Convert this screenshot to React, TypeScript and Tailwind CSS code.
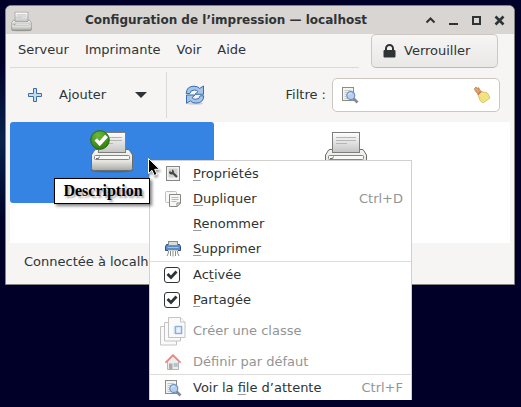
import type { ReactNode } from "react";

function PrinterIcon({ size, ok = false, id }: { size: number; ok?: boolean; id: string }) {
  return (
    <svg width={size} height={size} viewBox="0 0 48 48" aria-hidden="true" className="block shrink-0">
      <defs>
        <linearGradient id={id + "body"} x1="0" y1="0" x2="0" y2="1">
          <stop offset="0" stopColor="#f4f4f2" />
          <stop offset="0.55" stopColor="#e6e6e3" />
          <stop offset="1" stopColor="#a9aaa6" />
        </linearGradient>
        <linearGradient id={id + "paper"} x1="0" y1="0" x2="0" y2="1">
          <stop offset="0" stopColor="#ffffff" />
          <stop offset="1" stopColor="#c4c5c3" />
        </linearGradient>
        <radialGradient id={id + "ok"} cx="0.4" cy="0.25" r="0.8">
          <stop offset="0" stopColor="#6fba3a" />
          <stop offset="1" stopColor="#2d7a0c" />
        </radialGradient>
      </defs>
      <ellipse cx="24" cy="44.500" rx="21" ry="2" fill="#000" opacity="0.18" />
      <path d="M8 23.500h32q1.500 0 2 1.500l2.500 4v13.500q0 2-2 2h-37q-2 0-2-2V29L6 25q.5-1.500 2-1.500z" fill={`url(#${id}body)`} stroke="#6b6d69" strokeLinejoin="round" />
      <rect x="10.500" y="6.500" width="27" height="20" fill={`url(#${id}paper)`} stroke="#7c7e7b" />
      <path d="M14 11.500h20M14 14.500h20M14 17.500h11" stroke="#b4b6b3" />
      <rect x="6.500" y="29.500" width="35" height="4" rx="1" fill="#f8f8f6" stroke="#858784" />
      <path d="M8 32.500h2.500l1-2" stroke="#6b6d69" fill="none" />
      {ok && (
        <g>
          <circle cx="12" cy="14" r="9.300" fill={`url(#${id}ok)`} stroke="#286a0d" />
          <path d="M6.500 14.500l2.500-2.200 2.500 2.700 5.500-6.200 3 2.400-8.300 9z" fill="#fff" />
        </g>
      )}
    </svg>
  );
}

function SearchDocIcon() {
  return (
    <svg width="18" height="18" viewBox="0 0 18 18" aria-hidden="true" className="block shrink-0">
      <rect x="1.500" y="1.500" width="11" height="13" fill="#f3f3f1" stroke="#8a8c88" />
      <path d="M3.500 4.500h7M3.500 6.500h3M3.500 8.500h2M3.500 10.500h2M3.500 12.500h3" stroke="#c6c8c4" />
      <path d="M12.500 12.500l4 4" stroke="#858992" strokeWidth="2.600" />
      <circle cx="9.800" cy="9.600" r="4" fill="#b4d0f0" stroke="#6d93c4" strokeWidth="1.200" />
      <path d="M7.500 9a2.700 2.700 0 0 1 3-2" stroke="#e6f1fd" fill="none" />
    </svg>
  );
}

function BroomIcon() {
  return (
    <svg width="18" height="18" viewBox="0 0 18 18" aria-hidden="true" className="block">
      <path d="M1.500 2.500L3 1l2.500 2V1.500l2 3.500-3 2.500L2 4.500z" fill="#dfa267" stroke="#b9773c" strokeWidth="0.700" />
      <path d="M8 5.500L14.500 7l2.500 5q-2.500 1.500-7 5l-3-2.500-2-6z" fill="#f5e789" stroke="#cdb849" strokeWidth="0.800" />
      <path d="M8 8.500l5 5M11 7.500l4 4M7 11l3.500 4" stroke="#e0cd63" strokeWidth="0.700" />
      <path d="M4.800 8.800l3.700-3.600" stroke="#df6d55" strokeWidth="1.500" />
    </svg>
  );
}

function RefreshIcon() {
  return (
    <svg width="20" height="20" viewBox="0 0 20 20" aria-hidden="true" className="block">
      <ellipse cx="10" cy="18.500" rx="8" ry="1.300" fill="#000" opacity="0.15" />
      <path d="M1.200 8.500Q1.500 1.200 9 1.200q3.500 0 5.700 2.200L18.500 1v8.300H10l3-2.700Q11.500 5 9.300 5 5.500 5 4.800 8.500z" fill="#a5c5e8" stroke="#3a6cae" strokeLinejoin="round" />
      <path d="M18.800 10.800q-.3 7.300-7.800 7.300-3.500 0-5.700-2.200L1.500 18.300V10H10l-3 2.700q1.500 1.600 3.700 1.600 3.800 0 4.500-3.500z" fill="#a5c5e8" stroke="#3a6cae" strokeLinejoin="round" />
    </svg>
  );
}

function PropertiesIcon() {
  return (
    <svg width="16" height="16" viewBox="0 0 16 16" aria-hidden="true">
      <rect x="1.500" y="0.500" width="13" height="14" fill="#f2f2f0" stroke="#858784" />
      <rect x="3.500" y="2.500" width="9" height="9" fill="#d0d1ce" />
      <path d="M7.500 6.500l4.500 4.500" stroke="#444846" strokeWidth="2.200" />
      <path d="M4 6q0 2.500 2.500 2.500T9 6 7 3.500V6H5.500V4.500z" fill="#444846" />
    </svg>
  );
}

function CopyIcon() {
  return (
    <svg width="16" height="16" viewBox="0 0 16 16" aria-hidden="true">
      <rect x="0.500" y="0.500" width="11" height="11" rx="1" fill="#f8f8f6" stroke="#bfc1be" />
      <path d="M4.500 3.500h11v8.500l-3.500 3.500H4.500z" fill="#f7f7f5" stroke="#868884" />
      <path d="M6.500 6.500h7M6.500 8.500h7M6.500 10.500h5" stroke="#babcb8" />
      <path d="M12 15.500V12h3.500z" fill="#fff" stroke="#868884" />
    </svg>
  );
}

function ShredderIcon() {
  return (
    <svg width="16" height="16" viewBox="0 0 16 16" aria-hidden="true">
      <path d="M1.500 3.500h13l1 2v4H.5v-4z" fill="#5a8cc8" stroke="#294f83" />
      <rect x="3.500" y="0.500" width="9" height="4" fill="#dcdcd8" stroke="#8b8d89" />
      <path d="M2.500 6.500h11" stroke="#9dc1e8" />
      <path d="M3.500 10q0 3-1.500 5M5.500 10v5M8 10v5.500M10.500 10v5M12.500 10q0 3 1.500 5" stroke="#8b8d89" fill="none" />
      <path d="M3 9.500h10" stroke="#cfd0cd" />
    </svg>
  );
}

function ClassIcon() {
  return (
    <svg width="28" height="32" viewBox="0 0 28 32" aria-hidden="true">
      <g fill="#fafafa" stroke="#c3c4c2">
        <path d="M1.500 11.500h16v18.500h-16z" />
        <path d="M5.500 7.500h16v18.500h-16z" />
        <path d="M9.500 2.500h12l4.500 4.500v15.500H9.500z" />
        <path d="M21.500 2.500V7H26" />
      </g>
      <rect x="14.500" y="11" width="9" height="8" fill="#dbe7f5" />
      <rect x="16.500" y="11.500" width="6" height="7" fill="#e9f1fb" stroke="#8cafd9" strokeWidth="1.400" />
    </svg>
  );
}

function HomeIcon() {
  return (
    <svg width="16" height="16" viewBox="0 0 16 16" aria-hidden="true">
      <path d="M2.500 7.500L8 2l5.500 5.500v8h-11z" fill="#ececea" stroke="#b4b6b3" />
      <path d="M1 8.200L8 1.200l7 7" fill="none" stroke="#ec8785" strokeWidth="1.800" strokeLinecap="round" />
      <rect x="4" y="9.500" width="3.500" height="6" fill="#aaaba9" />
      <rect x="9" y="9.500" width="3.500" height="3" fill="#a8c3e4" stroke="#b5b7b4" strokeWidth="0.600" />
    </svg>
  );
}

function U({ children }: { children: ReactNode }) {
  return <span className="underline decoration-[#989b9b] decoration-1 underline-offset-2">{children}</span>;
}

function Item({ icon, shortcut, disabled, height = "h-[25px]", children }: { icon?: ReactNode; shortcut?: string; disabled?: boolean; height?: string; children: ReactNode }) {
  return (
    <button
      type="button"
      role="menuitem"
      disabled={disabled}
      className={`flex w-full items-center pr-2 text-left disabled:pt-0.5 disabled:text-[#929595] ${height}`}
    >
      <span className="flex w-[43px] shrink-0 justify-center pl-0.5">{icon}</span>
      <span className="grow">{children}</span>
      {shortcut && <span className="text-[#929595]">{shortcut}</span>}
    </button>
  );
}

function CheckItem({ children }: { children: ReactNode }) {
  return (
    <label className="flex h-[25px] items-center">
      <span className="flex w-[43px] shrink-0 justify-center">
        <span className="grid">
          <input type="checkbox" defaultChecked className="col-start-1 row-start-1 size-4 appearance-none rounded-[3px] border border-[#2e3436] bg-white" />
          <svg width="16" height="16" viewBox="0 0 16 16" aria-hidden="true" className="pointer-events-none col-start-1 row-start-1">
            <path d="M3.500 7l3.500 3.500L12.500 4.500" fill="none" stroke="#2e3436" strokeWidth="2.800" />
          </svg>
        </span>
      </span>
      <span>{children}</span>
    </label>
  );
}

function WindowButton({ label, children }: { label: string; children: ReactNode }) {
  return (
    <button type="button" aria-label={label} className="flex h-7 w-[23px] items-center justify-center">
      <svg width="11" height="11" viewBox="0 0 11 11" fill="none" stroke="#2e3436" strokeWidth="2">{children}</svg>
    </button>
  );
}

export default function App() {
  return (
    <div className="relative min-h-screen bg-[#000028] bg-[radial-gradient(ellipse_40px_80px_at_0_140px,#06234c,transparent)] py-[5px] pr-1.5 pl-[5px] font-['DejaVu_Sans',sans-serif] text-[13px] leading-4 text-[#2e3436]">
      <main className="overflow-hidden rounded-t-[6px] border border-[#85837f] bg-[#f6f5f4]">
        <header className="flex h-7 items-center bg-[#d9d5d2] pr-[3px] pl-1">
          <PrinterIcon size={23} id="title" />
          <h1 className="grow text-center text-xs font-bold whitespace-nowrap">Configuration de l’impression — localhost</h1>
          <WindowButton label="Enrouler"><path d="M1.500 7.500l4-4 4 4" /></WindowButton>
          <WindowButton label="Réduire"><path d="M1 9h9" /></WindowButton>
          <WindowButton label="Agrandir"><path d="M2 2h7v7H2z" /></WindowButton>
          <WindowButton label="Fermer"><path d="M1.500 1.500l8 8M9.500 1.500l-8 8" strokeWidth="2.600" /></WindowButton>
        </header>

        <div className="flex h-[34px] pr-4 pl-1">
          <nav className="flex grow items-center border-b border-[#dcdad8]">
            {["Serveur", "Imprimante", "Voir", "Aide"].map((m) => (
              <button key={m} type="button" className="px-2 pb-px">{m}</button>
            ))}
          </nav>
          <button type="button" className="ml-3 flex h-[34px] w-[127px] items-center gap-2 rounded-[5px] border border-[#cdc7c2] border-b-[#bfb8b1] bg-linear-to-b from-[#f6f5f3] to-[#eae8e6] px-[11px]">
            <svg width="13" height="14" viewBox="0 0 13 14" aria-hidden="true">
              <path d="M3 7V4.500a3.500 3.500 0 0 1 7 0V7" fill="none" stroke="#2e3436" strokeWidth="2" />
              <rect x="0.500" y="6" width="12" height="7.500" rx="1" fill="#2e3436" />
            </svg>
            Verrouiller
          </button>
        </div>

        <div className="flex h-[54px] items-center pr-[14px]">
          <button type="button" className="flex items-center gap-4 pl-[21px]">
            <svg width="16" height="16" viewBox="0 0 16 16" aria-hidden="true">
              <path d="M6.500 1.500h3v5h5v3h-5v5h-3v-5h-5v-3h5z" fill="#c3dbf3" stroke="#3a6cae" strokeLinejoin="round" />
            </svg>
            Ajouter
          </button>
          <button type="button" aria-label="Autres ajouts" className="ml-[29px] flex h-8 items-center">
            <svg width="12" height="6" viewBox="0 0 12 6"><path d="M0 0h12L6 6z" fill="#2e3436" /></svg>
          </button>
          <div className="ml-[19px] h-[46px] w-px bg-[#dcdad8]" />
          <button type="button" aria-label="Actualiser" className="ml-[18px]"><RefreshIcon /></button>
          <label htmlFor="filter" className="ml-auto">Filtre :</label>
          <div className="ml-[6px] flex h-[34px] w-[168px] items-center rounded-[5px] border border-[#cdc7c2] bg-white px-2">
            <SearchDocIcon />
            <input id="filter" type="text" className="h-full min-w-0 grow bg-transparent px-2 outline-none" />
            <button type="button" aria-label="Effacer le filtre"><BroomIcon /></button>
          </div>
        </div>

        <section className="mx-1 flex h-[121px] items-start gap-[30px] bg-white">
          <div className="flex h-[81px] w-[204px] justify-center rounded-[3px] bg-[#3584e4] pt-1">
            <PrinterIcon size={48} ok id="selected" />
          </div>
          <div className="flex h-[81px] w-[204px] justify-center pt-1">
            <PrinterIcon size={48} id="second" />
          </div>
        </section>

        <footer className="flex h-[41px] items-center px-[18px] pb-1">Connectée à localhost</footer>
      </main>

      <div role="menu" className="absolute top-[160px] left-[149px] w-[263px] border border-b-0 border-[#d1d0ce] bg-white">
        <Item icon={<PropertiesIcon />}><U>P</U>ropriétés</Item>
        <Item icon={<CopyIcon />} shortcut="Ctrl+D"><U>D</U>upliquer</Item>
        <Item><U>R</U>enommer</Item>
        <Item icon={<ShredderIcon />}><U>S</U>upprimer</Item>
        <hr className="border-[#dddddb]" />
        <CheckItem>Ac<U>t</U>ivée</CheckItem>
        <CheckItem><U>P</U>artagée</CheckItem>
        <Item icon={<ClassIcon />} disabled height="h-9">Créer une classe</Item>
        <Item icon={<HomeIcon />} disabled height="h-[26px]">Définir par défaut</Item>
        <hr className="border-[#dddddb]" />
        <Item icon={<SearchDocIcon />} shortcut="Ctrl+F">Voir la <U>f</U>ile d’attente</Item>
      </div>

      <div role="tooltip" className="absolute top-[178px] left-[54px] flex h-[26px] w-24 items-center justify-center border border-black bg-white pl-0.5 font-['Liberation_Serif',serif] text-base font-bold text-black shadow-[2px_2px_3px_rgba(0,0,0,0.5)] text-shadow-[2px_2px_2px_rgba(0,0,0,0.35)]">
        Description
      </div>

      <svg width="16" height="22" viewBox="0 0 16 22" aria-hidden="true" className="absolute top-[157px] left-[147px] drop-shadow-[1px_2px_1px_rgba(0,0,0,0.4)]">
        <path d="M1.500 1.500v15l3.500-3.200 2.300 5.200 2.700-1.200-2.300-5h4.800z" fill="#000" stroke="#fff" />
      </svg>
    </div>
  );
}
